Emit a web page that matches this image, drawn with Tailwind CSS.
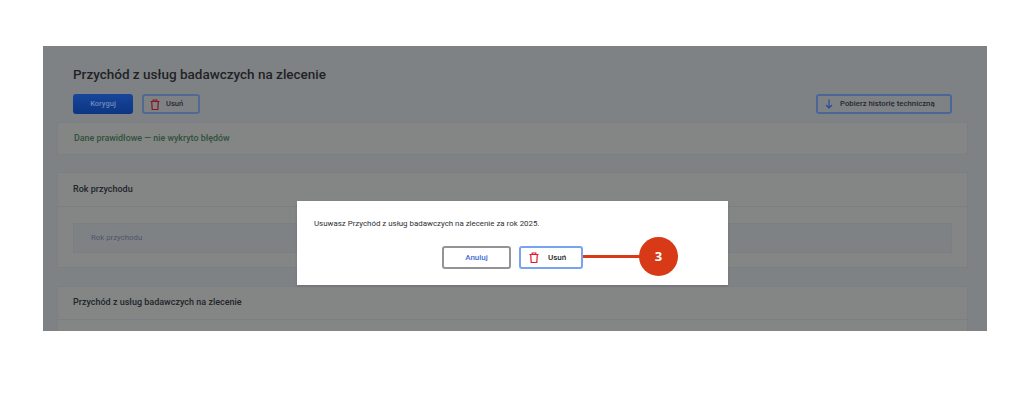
<!DOCTYPE html>
<html lang="pl">
<head>
    <meta charset="UTF-8">
    <meta name="viewport" content="width=device-width, initial-scale=1.0">
    <title>Przychód z usług badawczych na zlecenie</title>
    <script src="https://cdn.jsdelivr.net/npm/@tailwindcss/browser@4"></script>
</head>
<body class="bg-white h-[403px] overflow-hidden font-['Roboto',sans-serif]">
    <div class="pt-[46px] pl-[43px]">
        <!-- panel wyszarzony -->
        <div class="relative w-[944px] h-[285px] bg-[#7f8285] overflow-hidden">
            <div class="pl-[14px] pr-[19px]">
                <h1 class="pl-[16px] pt-[18px] text-[13.5px] leading-[20px] font-medium text-[#1f2226]">Przychód z usług badawczych na zlecenie</h1>
                <div class="flex items-center pl-[16px] pr-[16px] mt-[10px] h-[20px]">
                    <button class="w-[60px] h-[20px] rounded-[3px] bg-gradient-to-b from-[#17469b] to-[#0d3583] text-[7.5px] font-medium text-[#6f8ab8]">Koryguj</button>
                    <button class="ml-[9px] flex items-center w-[58px] h-[20px] rounded-[3px] border-2 border-[#526a92] text-[7.5px] font-medium text-[#25282c]">
                        <svg class="ml-[6px] w-[10px] h-[11px]" viewBox="0 0 10 11" fill="none" stroke="#8a1420" stroke-width="1.2"><path d="M0.5 2.5h9M3.2 2.5V1h3.6v1.5M1.7 2.5l.5 8h5.6l.5-8"/></svg>
                        <span class="ml-[6px]">Usuń</span>
                    </button>
                    <button class="ml-auto flex items-center w-[136px] h-[20px] rounded-[3px] border-2 border-[#4a6699] text-[7.8px] font-medium text-[#25282c]">
                        <svg class="ml-[7px] w-[8px] h-[10px]" viewBox="0 0 8 10" fill="none" stroke="#1f4a98" stroke-width="1.1"><path d="M4 0.5v8.5M1 6l3 3 3-3"/></svg>
                        <span class="ml-[7px]">Pobierz historię techniczną</span>
                    </button>
                </div>
                <div class="mt-[8px] h-[33px] flex items-center pl-[16px] bg-[#838685] border border-[#7b7e82] text-[8.9px] font-medium text-[#32503c]">Dane prawidłowe — nie wykryto błędów</div>
                <div class="mt-[17px] h-[96px] bg-[#838685] border border-[#7b7e82]">
                    <div class="h-[34px] flex items-center pl-[15px] border-b border-[#7b7e82] text-[9px] font-medium text-[#22252a]">Rok przychodu</div>
                    <div class="mt-[16px] mx-[15px] h-[30px] flex items-center pl-[17px] bg-[#7f8285] border border-[#7b7e82] text-[7.8px] text-[#4d5568]">Rok przychodu</div>
                </div>
                <div class="mt-[18px] h-[60px] bg-[#838685] border border-[#7b7e82]">
                    <div class="h-[33px] flex items-center pl-[15px] border-b border-[#7b7e82] text-[9px] font-medium text-[#22252a]">Przychód z usług badawczych na zlecenie</div>
                </div>
            </div>
            <!-- okno dialogowe -->
            <div class="absolute left-[254px] top-[155px] w-[431px] h-[84px] bg-white shadow-sm">
                <p class="pl-[17px] pt-[17px] text-[7.9px] leading-[12px] text-[#2c2f33]">Usuwasz Przychód z usług badawczych na zlecenie za rok 2025.</p>
                <div class="flex pl-[145px] mt-[16px]">
                    <button class="w-[69px] h-[23px] rounded-[3px] border-2 border-[#929497] bg-white text-[8px] font-medium text-[#3f6fd8]">Anuluj</button>
                    <button class="ml-[8px] flex items-center w-[64px] h-[23px] rounded-[3px] border-2 border-[#78a3f0] bg-white text-[8px] font-medium text-[#25282c]">
                        <svg class="ml-[8px] w-[10px] h-[11px]" viewBox="0 0 10 11" fill="none" stroke="#e01a2b" stroke-width="1.2"><path d="M0.5 2.5h9M3.2 2.5V1h3.6v1.5M1.7 2.5l.5 8h5.6l.5-8"/></svg>
                        <span class="ml-[9px]">Usuń</span>
                    </button>
                </div>
            </div>
            <!-- znacznik 3 -->
            <div class="absolute left-[540px] top-[191px] flex items-center">
                <div class="w-[57px] h-[3px] bg-[#d83a17]"></div>
                <div class="-ml-[1px] w-[39px] h-[39px] rounded-full bg-[#d83a17] flex items-center justify-center text-[13px] font-bold text-white font-['Open_Sans',sans-serif]">3</div>
            </div>
        </div>
    </div>
</body>
</html>
